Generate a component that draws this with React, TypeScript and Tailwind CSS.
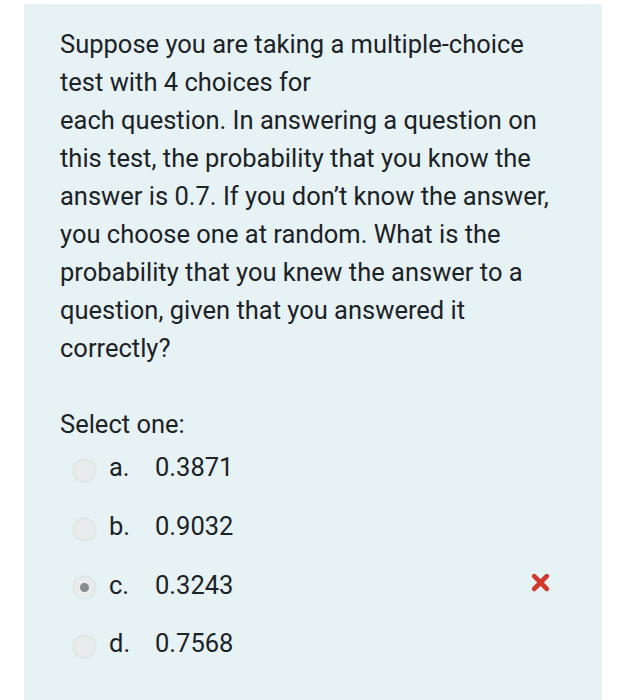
import React from 'react';

type Option = { letter: string; value: string; selected?: boolean; wrong?: boolean };

const options: Option[] = [
  { letter: 'a.', value: '0.3871' },
  { letter: 'b.', value: '0.9032' },
  { letter: 'c.', value: '0.3243', selected: true, wrong: true },
  { letter: 'd.', value: '0.7568' },
];

const lines = [
  'Suppose you are taking a multiple-choice',
  'test with 4 choices for',
  'each question. In answering a question on',
  'this test, the probability that you know the',
  'answer is 0.7. If you don\u2019t know the answer,',
  'you choose one at random. What is the',
  'probability that you knew the answer to a',
  'question, given that you answered it',
  'correctly?',
];

const Radio: React.FC<{ checked?: boolean }> = ({ checked }) => (
  <span className="flex h-[23px] w-[23px] items-center justify-center rounded-full border border-[#dde2e4] bg-[#e9ebec] shadow-[0_0_2px_rgba(0,0,0,0.06)]">
    {checked && <span className="h-[9px] w-[9px] rounded-full bg-[#898c8f]" />}
  </span>
);

const App: React.FC = () => {
  return (
    <div className="min-h-[700px] bg-white pt-[4px]">
      <div
        className="ml-[24px] min-h-[696px] w-[578px] bg-[#e6f2f4] pl-[36px] pr-[16px] pt-[21px] text-[#1c2226]"
        style={{ fontFamily: 'Roboto, "Noto Sans", sans-serif' }}
      >
        {/* Question */}
        <div className="text-[25.5px] leading-[38px]">
          {lines.map((l) => (
            <div key={l} className="whitespace-nowrap">
              {l}
            </div>
          ))}
        </div>

        {/* Answers */}
        <div className="mt-[38px] text-[25.5px] leading-[38px]">Select one:</div>
        <div className="-mt-[5px]">
          {options.map((o) => (
            <div key={o.letter} className="flex h-[58.7px] items-center text-[25.5px]">
              <span className="ml-[13px] mt-[6px]">
                <Radio checked={o.selected} />
              </span>
              <span className="ml-[13px] w-[46px]">{o.letter}</span>
              <span className="w-[340px]">{o.value}</span>
              {o.wrong && (
                <svg width="21" height="21" viewBox="0 0 20 20" className="ml-[35px] -mt-[4px]">
                  <path d="M4 4 L16 16 M16 4 L4 16" stroke="#d4382c" strokeWidth="4.5" strokeLinecap="round" />
                </svg>
              )}
            </div>
          ))}
        </div>
      </div>
    </div>
  );
};

export default App;
